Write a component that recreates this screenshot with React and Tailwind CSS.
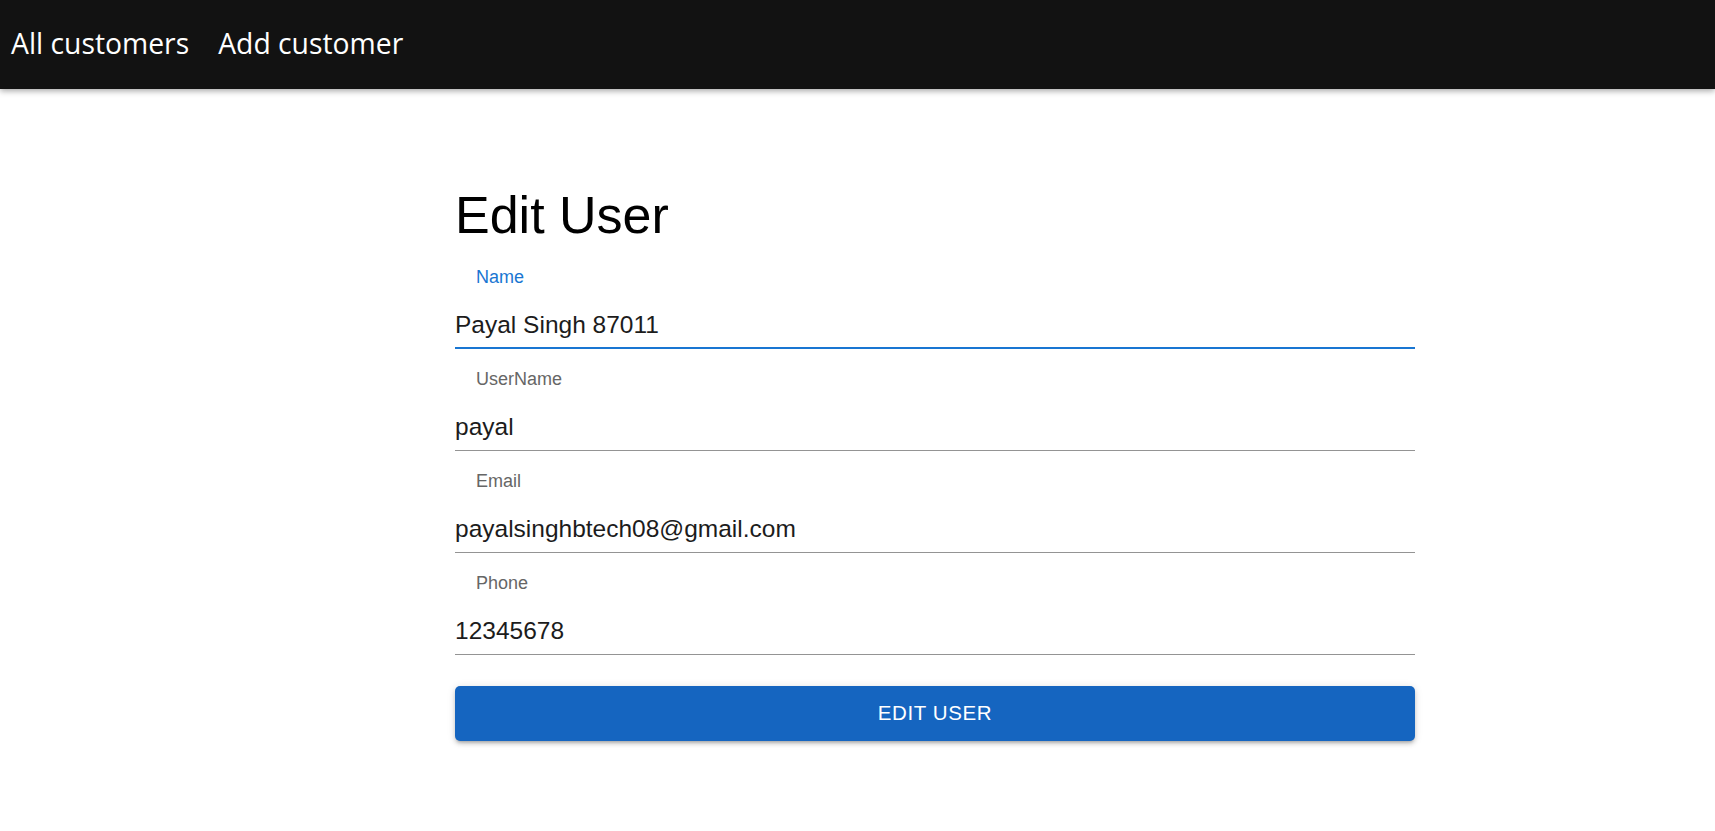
import React from 'react';

const fields = [
  { label: 'Name', value: 'Payal Singh 87011', focused: true },
  { label: 'UserName', value: 'payal' },
  { label: 'Email', value: 'payalsinghbtech08@gmail.com' },
  { label: 'Phone', value: '12345678' },
];

const Field = ({ label, value, focused }) => (
  <div className="mb-[19px]">
    <div
      className={
        'pl-[21px] pt-[1px] text-[18px] leading-[20px] ' +
        (focused ? 'text-[#1976d2]' : 'text-[#666666]')
      }
    >
      {label}
    </div>
    <div
      className={
        'mt-[24px] text-[24.5px] leading-[28px] text-[#1c1c1c] ' +
        (focused ? 'pb-[8px] border-b-2 border-[#1976d2]' : 'pb-[9px] border-b border-[#949494]')
      }
    >
      {value}
    </div>
  </div>
);

const App = () => {
  return (
    <div className="min-h-screen bg-white" style={{ fontFamily: '"Liberation Sans", Arial, sans-serif' }}>
      {/* Top bar */}
      <header
        className="h-[89px] bg-[#121212] flex items-center pl-[11px] pb-[2px] gap-[29px] text-white text-[28.3px] shadow-[0_2px_6px_rgba(0,0,0,0.35)]"
        style={{ fontFamily: '"Open Sans", "Noto Sans", sans-serif' }}
      >
        <a className="cursor-pointer">All customers</a>
        <a className="cursor-pointer">Add customer</a>
      </header>

      {/* Form */}
      <main className="pt-[96px] pl-[455px]">
        <div className="w-[960px]">
          <h1 className="text-[52px] leading-[61px] text-black font-normal mb-[20px]">Edit User</h1>

          {fields.map((f) => (
            <Field key={f.label} {...f} />
          ))}

          <button className="mt-[12px] w-full h-[55px] rounded-[5px] bg-[#1565c0] text-white text-[20.5px] tracking-[0.6px] uppercase shadow-[0_3px_3px_-2px_rgba(0,0,0,0.2),0_3px_4px_0_rgba(0,0,0,0.14),0_1px_8px_0_rgba(0,0,0,0.12)]">
            Edit User
          </button>
        </div>
      </main>
    </div>
  );
};

export default App;
